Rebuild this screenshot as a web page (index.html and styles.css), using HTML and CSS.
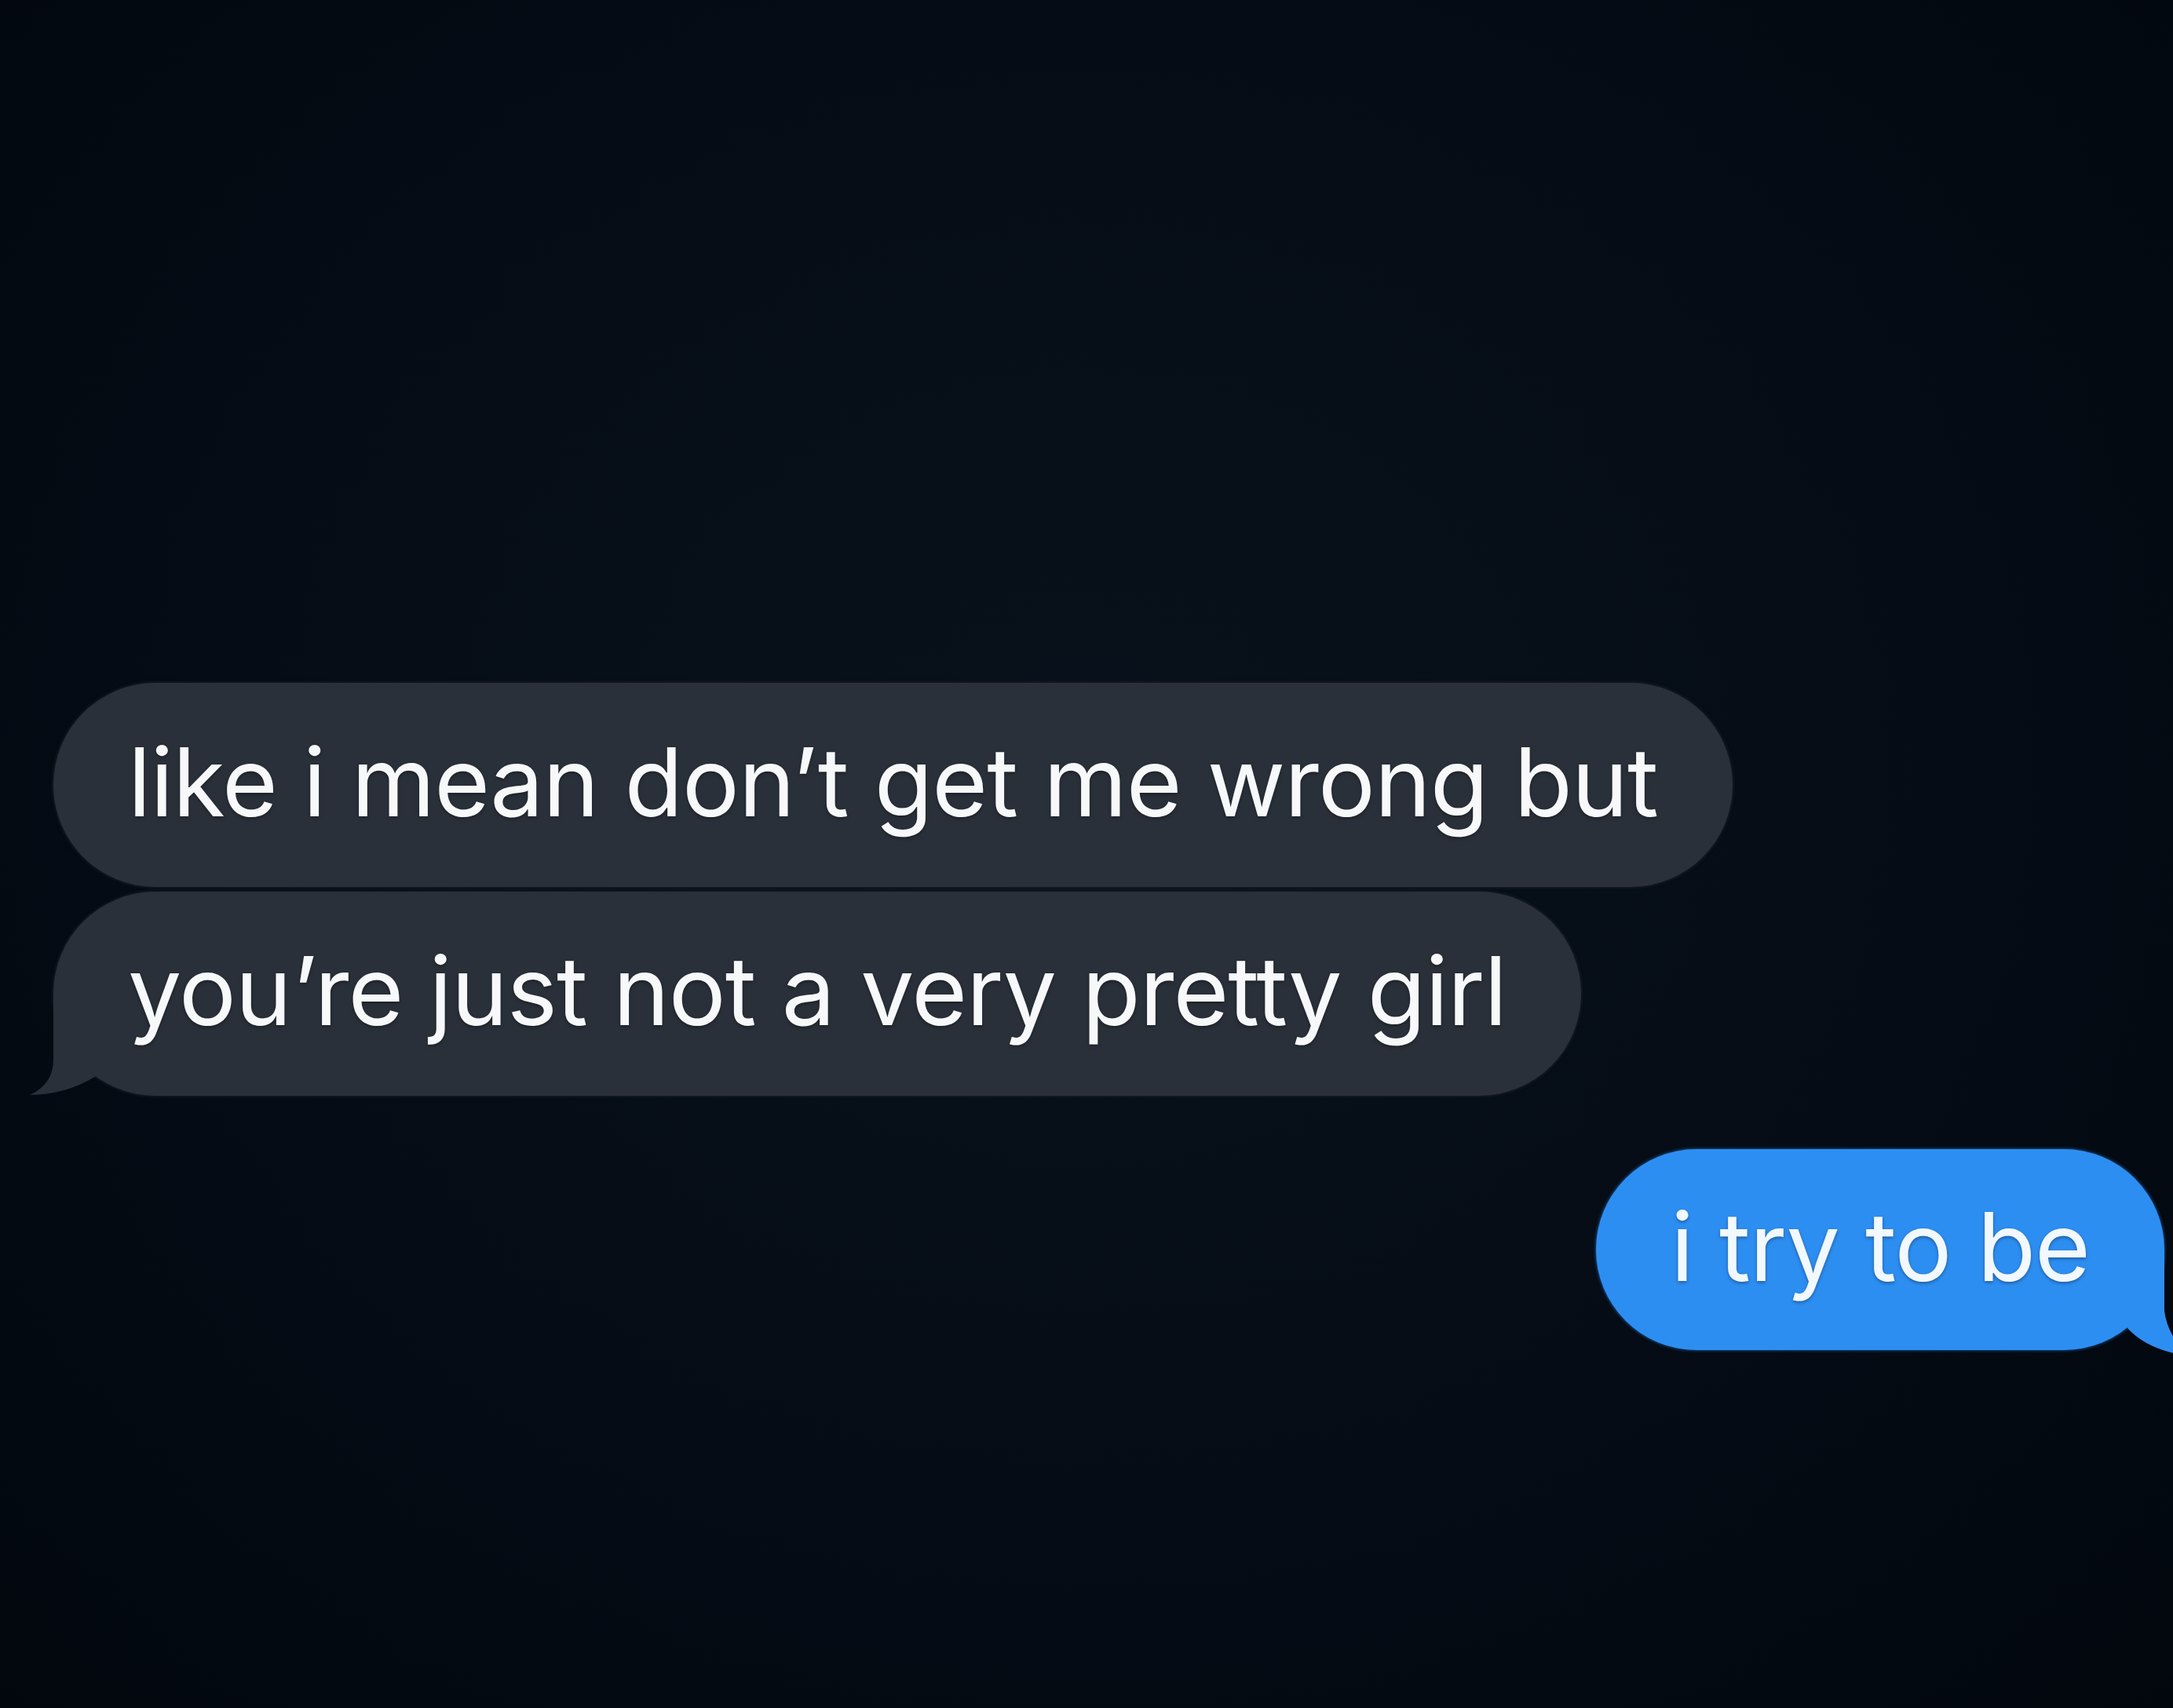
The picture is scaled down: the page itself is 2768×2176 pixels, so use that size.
FILE: index.html
```html
<!DOCTYPE html>
<html lang="en">
<head>
<meta charset="utf-8">
<title>Messages</title>
<link rel="stylesheet" href="styles.css">
</head>
<body>
<main class="thread">
  <div class="row row-in">
    <div class="bubble bubble-gray">like i mean don’t get me wrong but</div>
  </div>
  <div class="row row-in">
    <div class="bubble bubble-gray has-tail">you’re just not a very pretty girl
      <svg class="tail tail-left" viewBox="0 0 160 150" aria-hidden="true">
        <path d="M32,20 L32,104 Q32,135 2,149 Q50,148 86,125 L100,70 L40,20 Z"/>
      </svg>
    </div>
  </div>
  <div class="row row-out">
    <div class="bubble bubble-blue has-tail">i try to be
      <svg class="tail tail-right" viewBox="0 0 160 150" aria-hidden="true">
        <path d="M120,12 L120,90 Q124,122 152,148 Q98,140 73,112 L60,60 L110,12 Z"/>
      </svg>
    </div>
  </div>
</main>
</body>
</html>
```
FILE: styles.css
```css
html, body {
  margin: 0;
  padding: 0;
  width: 2768px;
  height: 2176px;
  overflow: hidden;
}

body {
  background: radial-gradient(ellipse at 50% 45%, #08111b 0%, #050c15 55%, #02070e 100%);
  font-family: Inter, "Noto Sans", "Liberation Sans", sans-serif;
  color: #f7f8fa;
}

.thread {
  display: flex;
  flex-direction: column;
  padding: 870px 11px 0 68px;
}

.row {
  display: flex;
}

.row-in {
  justify-content: flex-start;
  margin-bottom: 6px;
}

.row-out {
  justify-content: flex-end;
  margin-top: 62px;
}

.bubble {
  position: relative;
  display: flex;
  align-items: center;
  box-sizing: border-box;
  height: 260px;
  padding: 0 95px 8px 95px;
  border-radius: 130px;
  font-size: 121.6px;
  line-height: 1;
  letter-spacing: -1px;
  white-space: nowrap;
  text-shadow: 0 2px 4px rgba(0, 0, 0, 0.35);
}

.bubble-gray {
  background: #2a3039;
  box-shadow: 0 0 4px rgba(42, 48, 57, 0.8);
}

.bubble-blue {
  height: 256px;
  background: #2d8ef2;
  box-shadow: 0 0 4px rgba(45, 142, 242, 0.7);
  color: #f2f8ff;
}

.tail {
  position: absolute;
  width: 160px;
  height: 150px;
}

.tail-left {
  left: -32px;
  bottom: 0;
}

.tail-left path {
  fill: #2a3039;
}

.tail-right {
  right: -40px;
  bottom: -10px;
}

.tail-right path {
  fill: #2d8ef2;
}
```
